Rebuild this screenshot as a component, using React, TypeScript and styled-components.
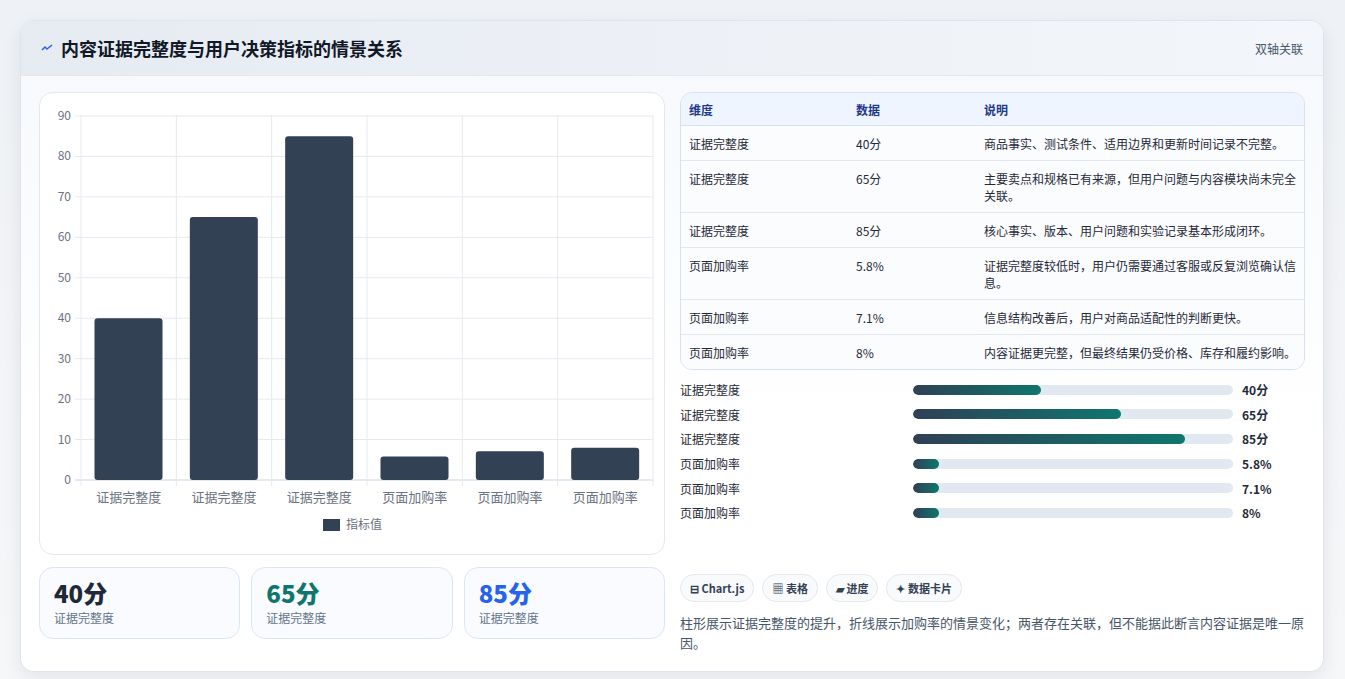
import React from "react";
import styled, { createGlobalStyle } from "styled-components";

const Global = createGlobalStyle`
  html, body { margin: 0; padding: 0; background: #f3f5f8; }
  body { font-family: "Noto Sans CJK SC", "Noto Sans", sans-serif; color: #1f2937; }
`;

const Page = styled.div`
  padding: 20px 21px 22px 20px;
  background: linear-gradient(#eef1f5, #f6f7f9);
`;
const Card = styled.div`
  background: #fff;
  border: 1px solid #dfe4ec;
  border-radius: 14px;
  box-shadow: 0 6px 18px rgba(15, 23, 42, 0.08);
  overflow: hidden;
`;
const Header = styled.div`
  height: 54px;
  display: flex;
  align-items: center;
  justify-content: space-between;
  padding: 0 20px;
  background: linear-gradient(90deg, #e6ebf2, #f3f6fa);
  border-bottom: 1px solid #e3e8ef;
`;
const Title = styled.h1`
  margin: 0;
  font-size: 18px;
  font-weight: 700;
  color: #111827;
  display: flex;
  align-items: center;
  gap: 8px;
`;
const Tag = styled.span`
  font-size: 12px;
  color: #475569;
`;
const Body = styled.div`
  display: grid;
  grid-template-columns: 626px 625px;
  gap: 15px;
  padding: 16px 18px 18px 18px;
  background: linear-gradient(#f7f9fc, #fff 60%);
`;
const Col = styled.div`
  display: flex;
  flex-direction: column;
`;
const ChartCard = styled.div`
  height: 461px;
  border: 1px solid #e3e8ef;
  border-radius: 14px;
  background: #fff;
  overflow: hidden;
`;
const Stats = styled.div`
  display: grid;
  grid-template-columns: repeat(3, 1fr);
  gap: 11px;
  margin-top: 12px;
`;
const Stat = styled.div`
  height: 72px;
  box-sizing: border-box;
  border: 1px solid #dbe6f5;
  border-radius: 14px;
  background: #f9fbfe;
  padding: 8px 14px;
`;
const StatNum = styled.div<{ $c: string }>`
  font-size: 24px;
  font-weight: 800;
  line-height: 34px;
  color: ${(p) => p.$c};
`;
const StatLabel = styled.div`
  font-size: 12px;
  color: #64748b;
  line-height: 16px;
`;
const Table = styled.table`
  width: 100%;
  table-layout: fixed;
  border-collapse: separate;
  border-spacing: 0;
  border: 1px solid #d8e1ee;
  border-radius: 12px;
  overflow: hidden;
  font-size: 12px;
`;
const Th = styled.th<{ $w?: number }>`
  text-align: left;
  font-weight: 700;
  color: #1e3a8a;
  background: #eff5fe;
  height: 32px;
  padding: 0 8px;
  border-bottom: 1px solid #d8e1ee;
  width: ${(p) => (p.$w ? p.$w + "px" : "auto")};
`;
const Td = styled.td`
  padding: 9px 8px 8px;
  vertical-align: top;
  line-height: 17px;
  color: #1f2937;
  border-bottom: 1px solid #e3e8ef;
  background: #fbfcfe;
  tr:last-child > & { border-bottom: none; }
`;
const Bars = styled.div`
  margin-top: 11px;
  display: flex;
  flex-direction: column;
  gap: 8.7px;
`;
const BarRow = styled.div`
  display: grid;
  grid-template-columns: 224px 320px auto;
  align-items: center;
  column-gap: 9px;
  font-size: 12px;
  height: 16px;
`;
const Track = styled.div`
  height: 10px;
  border-radius: 5px;
  background: #e2e8f0;
  overflow: hidden;
`;
const Fill = styled.div`
  height: 100%;
  border-radius: 5px;
  background: linear-gradient(90deg, #2f4055, #0f766e);
`;
const BarVal = styled.span`
  font-weight: 700;
`;
const Chips = styled.div`
  margin-top: 54px;
  display: flex;
  gap: 8px;
`;
const Chip = styled.span`
  height: 28px;
  box-sizing: border-box;
  border: 1px solid #e3e8ef;
  border-radius: 14px;
  background: #f8fafc;
  padding: 0 9px;
  display: flex;
  align-items: center;
  font-size: 11px;
  font-weight: 700;
  color: #334155;
`;
const Note = styled.p`
  margin: 11px 0 0;
  font-size: 13px;
  line-height: 20px;
  color: #475569;
`;

const labels = ["证据完整度", "证据完整度", "证据完整度", "页面加购率", "页面加购率", "页面加购率"];
const values = [40, 65, 85, 5.8, 7.1, 8];

function Chart() {
  const x0 = 41, x1 = 613, y0 = 23, y1 = 387;
  const cw = (x1 - x0) / 6;
  const yv = (v: number) => y1 - ((y1 - y0) * v) / 90;
  return (
    <svg width="626" height="461" viewBox="0 0 626 461" fontFamily="Noto Sans CJK SC, sans-serif">
      {Array.from({ length: 10 }, (_, i) => (
        <g key={i}>
          <line x1={x0 - 6} x2={x1} y1={yv(i * 10)} y2={yv(i * 10)} stroke={i === 0 ? "#cbd5e1" : "#e5e9ef"} />
          <text x={x0 - 10} y={yv(i * 10) + 4} fontSize="12" fill="#6b7280" textAnchor="end">{i * 10}</text>
        </g>
      ))}
      {Array.from({ length: 7 }, (_, i) => (
        <line key={i} x1={x0 + cw * i} x2={x0 + cw * i} y1={y0} y2={y1 + 6} stroke="#e5e9ef" />
      ))}
      {values.map((v, i) => (
        <g key={i}>
          <rect x={x0 + cw * i + 13.5} y={yv(v)} width={68} height={y1 - yv(v)} rx="3" fill="#334155" />
          <text x={x0 + cw * i + cw / 2} y={409} fontSize="13" fill="#6b7280" textAnchor="middle">{labels[i]}</text>
        </g>
      ))}
      <rect x="283" y="426" width="17" height="12" fill="#334155" />
      <text x="306" y="436" fontSize="12" fill="#6b7280">指标值</text>
    </svg>
  );
}

const rows = [
  ["证据完整度", "40分", "商品事实、测试条件、适用边界和更新时间记录不完整。"],
  ["证据完整度", "65分", "主要卖点和规格已有来源，但用户问题与内容模块尚未完全关联。"],
  ["证据完整度", "85分", "核心事实、版本、用户问题和实验记录基本形成闭环。"],
  ["页面加购率", "5.8%", "证据完整度较低时，用户仍需要通过客服或反复浏览确认信息。"],
  ["页面加购率", "7.1%", "信息结构改善后，用户对商品适配性的判断更快。"],
  ["页面加购率", "8%", "内容证据更完整，但最终结果仍受价格、库存和履约影响。"],
];
const pct = [40, 65, 85, 8, 8, 8];

export default function App() {
  return (
    <>
      <Global />
      <Page>
        <Card>
          <Header>
            <Title>
              <svg width="12" height="10" viewBox="0 0 12 10"><path d="M1 7 L4 4 L6 6 L11 2" stroke="#2563eb" strokeWidth="1.5" fill="none" /></svg>
              内容证据完整度与用户决策指标的情景关系
            </Title>
            <Tag>双轴关联</Tag>
          </Header>
          <Body>
            <Col>
              <ChartCard><Chart /></ChartCard>
              <Stats>
                <Stat><StatNum $c="#1f2937">40分</StatNum><StatLabel>证据完整度</StatLabel></Stat>
                <Stat><StatNum $c="#0f766e">65分</StatNum><StatLabel>证据完整度</StatLabel></Stat>
                <Stat><StatNum $c="#2563eb">85分</StatNum><StatLabel>证据完整度</StatLabel></Stat>
              </Stats>
            </Col>
            <Col>
              <Table>
                <thead>
                  <tr><Th $w={151}>维度</Th><Th $w={112}>数据</Th><Th>说明</Th></tr>
                </thead>
                <tbody>
                  {rows.map((r, i) => (
                    <tr key={i}><Td>{r[0]}</Td><Td>{r[1]}</Td><Td>{r[2]}</Td></tr>
                  ))}
                </tbody>
              </Table>
              <Bars>
                {rows.map((r, i) => (
                  <BarRow key={i}>
                    <span>{r[0]}</span>
                    <Track><Fill style={{ width: pct[i] + "%" }} /></Track>
                    <BarVal>{r[1]}</BarVal>
                  </BarRow>
                ))}
              </Bars>
              <Chips>
                <Chip>⊟ Chart.js</Chip>
                <Chip>▦ 表格</Chip>
                <Chip>▰ 进度</Chip>
                <Chip>✦ 数据卡片</Chip>
              </Chips>
              <Note>柱形展示证据完整度的提升，折线展示加购率的情景变化；两者存在关联，但不能据此断言内容证据是唯一原因。</Note>
            </Col>
          </Body>
        </Card>
      </Page>
    </>
  );
}
